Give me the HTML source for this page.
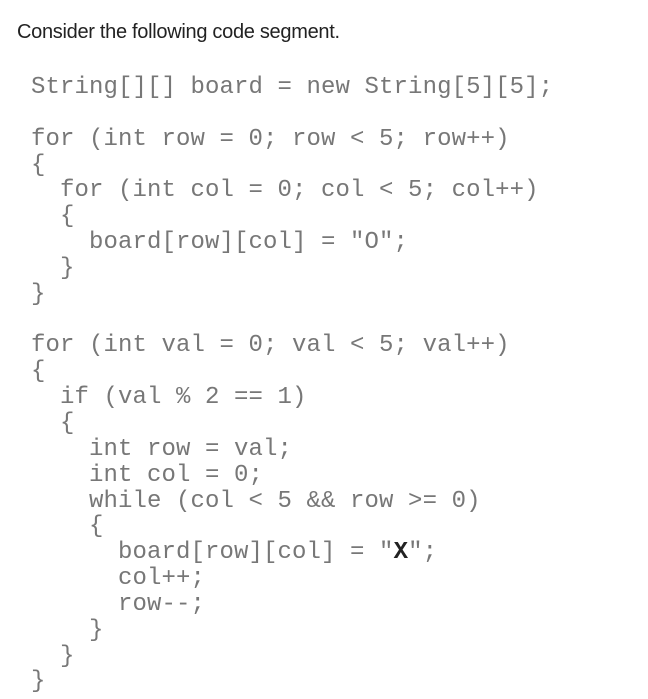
<!DOCTYPE html>
<html><head><meta charset="utf-8"><style>
html,body{margin:0;padding:0;background:#fff;width:648px;height:699px;overflow:hidden}
.h{position:absolute;left:17px;top:21px;font-family:"Liberation Sans",sans-serif;font-size:20px;color:#222;letter-spacing:-0.3px}
pre{position:absolute;left:31px;top:75px;margin:0;font-family:"Liberation Mono",monospace;font-size:24px;line-height:25.85px;color:#777;letter-spacing:0.1px}
</style></head><body>
<div class="h">Consider the following code segment.</div>
<pre>String[][] board = new String[5][5];

for (int row = 0; row &lt; 5; row++)
{
  for (int col = 0; col &lt; 5; col++)
  {
    board[row][col] = "O";
  }
}

for (int val = 0; val &lt; 5; val++)
{
  if (val % 2 == 1)
  {
    int row = val;
    int col = 0;
    while (col &lt; 5 &amp;&amp; row &gt;= 0)
    {
      board[row][col] = "<b style="color:#222">X</b>";
      col++;
      row--;
    }
  }
}</pre>
</body></html>
